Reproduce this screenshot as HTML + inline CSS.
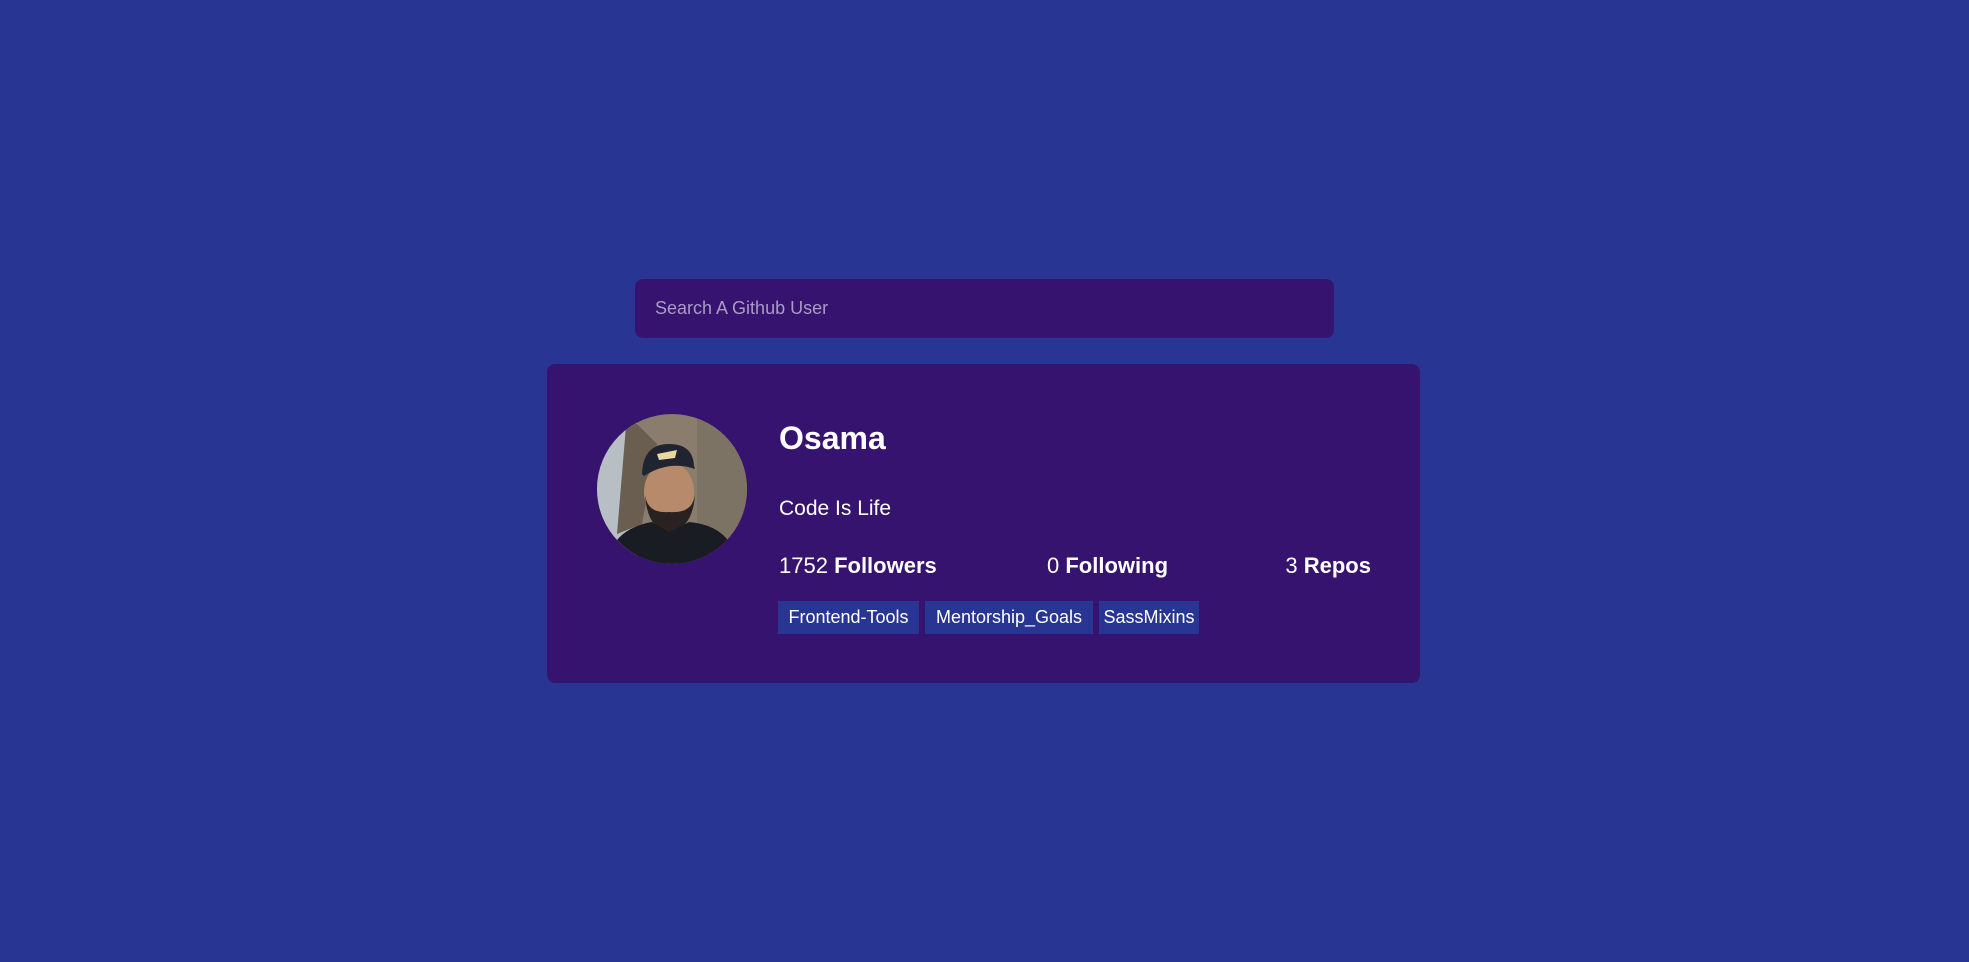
<!DOCTYPE html>
<html><head><meta charset="utf-8"><style>
html,body{margin:0;padding:0;}
body{width:1969px;height:962px;background:#283593;font-family:"Liberation Sans",sans-serif;position:relative;overflow:hidden;color:#fff;}
.search{position:absolute;left:635px;top:279px;width:699px;height:59px;background:#371370;border-radius:8px;}
.search span{position:absolute;left:20px;top:19px;font-size:18px;color:#a99bc4;}
.card{position:absolute;left:547px;top:364px;width:873px;height:319px;background:#371370;border-radius:8px;}
.av{position:absolute;left:50px;top:50px;width:150px;height:150px;border-radius:50%;overflow:hidden;}
.name{position:absolute;left:232px;top:56px;font-size:32px;font-weight:bold;}
.bio{position:absolute;left:232px;top:133px;font-size:21px;}
.st{position:absolute;top:189px;font-size:22px;white-space:nowrap;}
.st b{font-weight:bold;}
.tag{position:absolute;top:237px;height:33px;background:#283593;font-size:18px;line-height:33px;text-align:center;}
</style></head><body>
<div class="search"><span>Search A Github User</span></div>
<div class="card">
 <div class="av"><svg width="150" height="150" viewBox="0 0 150 150">
  <rect width="150" height="150" fill="#8a7d6e"/>
  <rect x="0" y="0" width="40" height="150" fill="#b8bfc4"/>
  <rect x="100" y="0" width="50" height="150" fill="#7d7364"/>
  <path d="M30 0 L60 30 L45 110 L20 120 Z" fill="#6a5e50"/>
  <ellipse cx="72" cy="78" rx="25" ry="30" fill="#b88a6c"/>
  <path d="M48 80 Q50 115 72 118 Q96 115 98 80 Q96 100 72 98 Q50 100 48 80Z" fill="#2a2220"/>
  <path d="M45 60 Q46 30 72 30 Q96 30 97 52 L98 55 Q72 46 47 62Z" fill="#1f2430"/>
  <path d="M60 40 L80 36 L78 44 L62 46Z" fill="#e8d8a0"/>
  <path d="M10 150 Q15 115 55 108 L72 118 L92 108 Q135 112 140 150Z" fill="#1a1c24"/>
 </svg></div>
 <div class="name">Osama</div>
 <div class="bio">Code Is Life</div>
 <div class="st" style="left:232px">1752 <b>Followers</b></div>
 <div class="st" style="left:500px">0 <b>Following</b></div>
 <div class="st" style="right:49px">3 <b>Repos</b></div>
 <div class="tag" style="left:231px;width:141px">Frontend-Tools</div>
 <div class="tag" style="left:378px;width:168px">Mentorship_Goals</div>
 <div class="tag" style="left:552px;width:100px">SassMixins</div>
</div>
</body></html>
